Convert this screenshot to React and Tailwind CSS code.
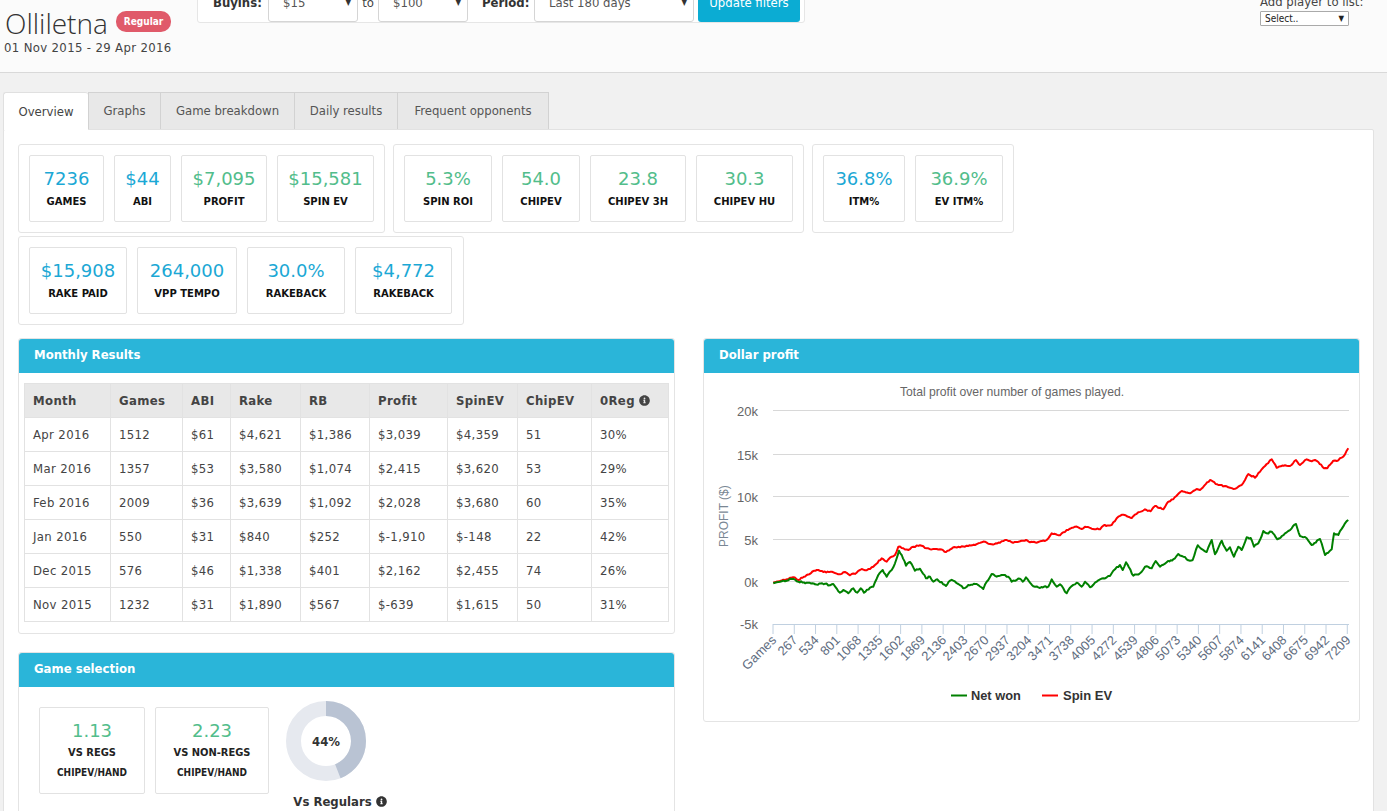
import React from "react";
import { FaInfoCircle } from "react-icons/fa";

const body = "font-['DejaVu_Sans_Condensed','DejaVu_Sans',sans-serif]";
const verdana = "font-['DejaVu_Sans',sans-serif]";
const BLUE = "text-[#1ba8d5]";
const GREEN = "text-[#52bd8b]";

const g1 = [
  ["7236", "GAMES", BLUE, "w-[75px]"],
  ["$44", "ABI", BLUE, "w-[57px]"],
  ["$7,095", "PROFIT", GREEN, "w-[86px]"],
  ["$15,581", "SPIN EV", GREEN, "w-[97px]"],
];
const g2 = [
  ["5.3%", "SPIN ROI", GREEN, "w-[88px]"],
  ["54.0", "CHIPEV", GREEN, "w-[78px]"],
  ["23.8", "CHIPEV 3H", GREEN, "w-[96px]"],
  ["30.3", "CHIPEV HU", GREEN, "w-[97px]"],
];
const g3 = [
  ["36.8%", "ITM%", BLUE, "w-[82px]"],
  ["36.9%", "EV ITM%", GREEN, "w-[88px]"],
];
const g4 = [
  ["$15,908", "RAKE PAID", BLUE, "w-[98px]"],
  ["264,000", "VPP TEMPO", BLUE, "w-[100px]"],
  ["30.0%", "RAKEBACK", BLUE, "w-[98px]"],
  ["$4,772", "RAKEBACK", BLUE, "w-[97px]"],
];

const rows = [
  ["Apr 2016", "1512", "$61", "$4,621", "$1,386", "$3,039", "$4,359", "51", "30%"],
  ["Mar 2016", "1357", "$53", "$3,580", "$1,074", "$2,415", "$3,620", "53", "29%"],
  ["Feb 2016", "2009", "$36", "$3,639", "$1,092", "$2,028", "$3,680", "60", "35%"],
  ["Jan 2016", "550", "$31", "$840", "$252", "$-1,910", "$-148", "22", "42%"],
  ["Dec 2015", "576", "$46", "$1,338", "$401", "$2,162", "$2,455", "74", "26%"],
  ["Nov 2015", "1232", "$31", "$1,890", "$567", "$-639", "$1,615", "50", "31%"],
];
const heads = ["Month", "Games", "ABI", "Rake", "RB", "Profit", "SpinEV", "ChipEV", "0Reg"];
const colW = [86, 72, 48, 70, 69, 78, 70, 74, 77];

const z6 = (a) => a.map(([x, y]) => [700 + x / 3, 400 + y / 3]);
const z7 = (a) => a.map(([x, y]) => [1040 + x / 3, 400 + y / 3]);

const red = [
  ...z6([[220,548],[240,543],[260,538],[280,532],[295,540],[320,525],[350,510],[370,516],[400,517],[420,523],[435,516],[450,526],[470,518],[485,507],[500,511],[520,500],[545,475],[560,485],[575,470],[585,465],[595,440],[610,445],[625,450],[640,440],[660,436],[680,445],[700,447],[720,448],[738,456],[760,442],[780,442],[800,437],[825,435],[835,430],[855,425],[875,433],[900,428],[920,420],[935,427],[960,424],[978,420],[990,427],[1015,426]]),
  ...z7([[0,424],[20,420],[35,400],[60,406],[80,390],[105,380],[125,387],[135,380],[155,386],[180,388],[190,377],[215,375],[235,350],[250,344],[275,354],[295,337],[315,328],[332,334],[345,318],[370,328],[385,305],[400,298],[425,273],[450,280],[470,267],[480,270],[510,240],[535,255],[555,258],[565,262],[585,266],[605,255],[625,222],[645,233],[665,208],[680,192],[695,178],[710,203],[735,196],[750,198],[768,180],[780,195],[800,178],[815,184],[825,180],[835,186],[852,205],[862,205],[880,182],[890,183],[910,170],[925,145]]),
];
const green = [
  ...z6([[220,550],[240,545],[260,542],[275,537],[295,545],[320,548],[345,553],[375,551],[390,556],[400,552],[420,578],[430,570],[445,580],[460,565],[472,578],[482,565],[492,578],[510,563],[520,560],[535,525],[548,510],[560,530],[575,510],[585,490],[597,452],[605,465],[618,497],[630,486],[645,512],[660,506],[678,535],[690,530],[700,545],[712,538],[738,558],[750,542],[760,542],[775,552],[790,565],[805,555],[830,552],[850,567],[860,545],[875,522],[890,530],[905,525],[925,530],[935,545],[950,540],[960,536],[968,545],[978,532],[990,548],[1005,560],[1015,562]]),
  ...z7([[0,564],[25,560],[35,538],[50,560],[60,553],[80,580],[90,563],[110,548],[125,560],[135,545],[150,562],[170,545],[190,535],[210,528],[225,508],[240,495],[248,510],[258,487],[280,527],[300,520],[315,500],[335,505],[347,483],[360,500],[380,487],[405,475],[415,462],[430,470],[450,482],[458,480],[473,436],[500,456],[515,420],[525,463],[545,422],[560,452],[570,442],[582,470],[595,440],[605,450],[620,412],[632,414],[642,440],[655,430],[670,393],[680,400],[695,395],[712,418],[735,400],[755,385],[768,372],[780,408],[800,415],[815,435],[840,417],[855,465],[875,448],[882,400],[895,405],[915,370],[925,360]]),
];

// Resample each hand-read curve every 1.5px and add a fixed small wobble so it has the jagged look of raw data.
function roughen(pts, amp) {
  const out = [];
  for (let i = 0; i < pts.length - 1; i++) {
    const [x0, y0] = pts[i];
    const [x1, y1] = pts[i + 1];
    const n = Math.max(1, Math.round((x1 - x0) / 1.5));
    for (let k = 0; k < n; k++) {
      const t = k / n;
      const x = x0 + (x1 - x0) * t;
      const s = Math.sin(x * 127.1) * 43758.5453;
      const w = k === 0 ? 0 : (s - Math.floor(s) - 0.5) * 2 * amp;
      out.push([x, y0 + (y1 - y0) * t + w]);
    }
  }
  out.push(pts[pts.length - 1]);
  return out;
}
const toD = (pts) => pts.map(([x, y], i) => `${i ? "L" : "M"}${x.toFixed(1)} ${y.toFixed(1)}`).join(" ");

const ticks = ["Games","267","534","801","1068","1335","1602","1869","2136","2403","2670","2937","3204","3471","3738","4005","4272","4539","4806","5073","5340","5607","5874","6141","6408","6675","6942","7209"];
const yTicks = [["20k", 410.5], ["15k", 454.5], ["10k", 496.5], ["5k", 539.5], ["0k", 581.5]];

function Stat({ v }) {
  return (
    <div className={`${v[3]} h-[67px] bg-white border border-[#e2e2e2] rounded-[2px] flex flex-col items-center pt-[11px] ${verdana}`}>
      <div className={`text-[18px] leading-[24px] whitespace-nowrap ${v[2]}`}>{v[0]}</div>
      <div className="text-[10px] leading-[14px] font-bold text-[#111] mt-[4px] whitespace-nowrap">{v[1]}</div>
    </div>
  );
}
function Group({ items, extra = "" }) {
  return (
    <div className={`flex gap-[10px] p-[10px] border border-[#e4e4e4] rounded-[3px] bg-white ${extra}`}>
      {items.map((v) => <Stat key={v[1] + v[0]} v={v} />)}
    </div>
  );
}
function PanelHead({ children }) {
  return (
    <div className="h-[34px] bg-[#2ab5d9] rounded-t-[3px] pl-[15px] pb-[3px] flex items-center text-white font-bold text-[13px]">
      {children}
    </div>
  );
}
function Sel({ w, text }) {
  return (
    <div className={`${w} h-[34px] bg-white border border-[#d5d5d5] rounded-[3px] flex items-center justify-between pl-[14px] pr-[6px] pb-[4px] text-[13px] text-[#555]`}>
      <span>{text}</span>
      <span className="text-[8px] text-[#333]">▼</span>
    </div>
  );
}
function GameCard({ w, v, a }) {
  return (
    <div className={`${w} h-[87px] border border-[#e2e2e2] rounded-[2px] flex flex-col items-center pt-[11px]`}>
      <div className={`text-[18px] leading-[24px] ${GREEN} ${verdana}`}>{v}</div>
      <div className="text-[11px] leading-[14px] font-bold text-[#222] mt-[3px]">{a}</div>
      <div className="text-[10px] leading-[14px] text-[#222] font-semibold mt-[6px]">CHIPEV/HAND</div>
    </div>
  );
}

export default function App() {
  return (
    <div className={`h-[811px] overflow-hidden bg-[#f1f1f1] text-[#444] ${body}`}>
      <header className="h-[73px] bg-[#fbfbfb] border-b border-[#d9d9d9] flex items-start overflow-hidden">
        <div className="w-[197px] shrink-0 pl-[5px] pt-[4px]">
          <div className="flex items-center h-[34px]">
            <span className="font-['Open_Sans',sans-serif] font-light text-[28px] leading-[34px] pt-[3px] text-[#333]">Olliletna</span>
            <span className="ml-[8px] h-[21px] px-[8px] rounded-[10px] bg-[#e05a6a] text-white text-[10px] font-bold flex items-center">Regular</span>
          </div>
          <div className="text-[13px] leading-[16px] mt-[2px] -ml-[1px] tracking-[0.35px] text-[#444] whitespace-nowrap">01 Nov 2015 - 29 Apr 2016</div>
        </div>
        <div className="w-[608px] h-[36px] -mt-[13px] shrink-0 bg-white border border-[#e6e6e6] rounded-[3px] flex items-center pl-[15px] pr-[4px] pb-[1px]">
          <span className="font-bold text-[13px] text-[#333] w-[55px] mb-[4px]">Buyins:</span>
          <Sel w="w-[90px]" text="$15" />
          <span className="w-[20px] text-center text-[13px] mb-[4px]">to</span>
          <Sel w="w-[90px]" text="$100" />
          <span className="font-bold text-[13px] text-[#333] ml-[14px] w-[52px] mb-[4px]">Period:</span>
          <Sel w="w-[160px]" text="Last 180 days" />
          <div className="ml-[4px] w-[102px] h-[34px] rounded-[3px] bg-[#0bacd3] text-white text-[13px] pb-[4px] flex items-center justify-center">Update filters</div>
        </div>
        <div className="ml-[455px] -mt-[6px] w-[110px]">
          <div className="text-[13px] leading-[16px] whitespace-nowrap text-[#444]">Add player to list:</div>
          <div className="mt-[1px] w-[89px] h-[15px] bg-white border border-[#aaa] rounded-[1px] flex items-center justify-between pl-[4px] pr-[4px] text-[10px] text-[#222]">
            <span>Select..</span><span className="text-[8px]">▼</span>
          </div>
        </div>
      </header>

      <main className="pt-[19px] pl-[3px] w-[1374px]">
        <div className="flex relative z-10 h-[38px] text-[13px]">
          <div className="w-[85px] bg-white border-l border-t border-[#e0e0e0] rounded-t-[3px] flex items-center justify-center text-[#444]">Overview</div>
          {[["Graphs", "w-[73px]"], ["Game breakdown", "w-[135px]"], ["Daily results", "w-[104px]"], ["Frequent opponents", "w-[152px]"]].map(([t, w]) => (
            <div key={t} className={`${w} h-[37px] bg-[#e8e8e8] border-l border-t border-r border-[#d2d2d2] -mr-[1px] flex items-center justify-center text-[#555]`}>{t}</div>
          ))}
        </div>
        <div className="-mt-[1px] bg-white border border-[#e2e2e2] rounded-[2px] pt-[14px] pl-[14px] pr-[13px] h-[700px]">
          <div className="flex gap-[8px]">
            <Group items={g1} />
            <Group items={g2} />
            <Group items={g3} />
          </div>
          <div className="flex mt-[3px]">
            <Group items={g4} extra="pr-[11px]" />
          </div>

          <div className="flex gap-[28px] mt-[13px] items-start">
            <div className="w-[657px] shrink-0">
              <section className="border border-[#e4e4e4] rounded-[3px] h-[296px]">
                <PanelHead>Monthly Results</PanelHead>
                <div className="pt-[10px] px-[5px]">
                  <table className="border-collapse w-[645px] table-fixed text-[13px] tracking-[0.35px]">
                    <colgroup>{colW.map((w, i) => <col key={i} style={{ width: w }} />)}</colgroup>
                    <thead>
                      <tr className="h-[34px] bg-[#e8e8e8]">
                        {heads.map((h) => (
                          <th key={h} className="text-left pl-[8px] font-bold text-[#444] border border-[#e2e2e2]">
                            <span className="inline-flex items-center gap-[4px]">{h}{h === "0Reg" && <FaInfoCircle className="w-[11px] h-[11px]" />}</span>
                          </th>
                        ))}
                      </tr>
                    </thead>
                    <tbody>
                      {rows.map((r) => (
                        <tr key={r[0]} className="h-[34px]">
                          {r.map((c, i) => <td key={i} className="pl-[8px] border border-[#e2e2e2] text-[#444] whitespace-nowrap">{c}</td>)}
                        </tr>
                      ))}
                    </tbody>
                  </table>
                </div>
              </section>
              <section className="mt-[18px] border border-[#e4e4e4] rounded-[3px] h-[300px]">
                <PanelHead>Game selection</PanelHead>
                <div className="flex pl-[20px] pt-[20px]">
                  <GameCard w="w-[106px]" v="1.13" a="VS REGS" />
                  <div className="w-[10px]" />
                  <GameCard w="w-[114px]" v="2.23" a="VS NON-REGS" />
                  <div className="ml-[7px] -mt-[6px] w-[100px] flex flex-col items-center">
                    <svg width="80" height="80" viewBox="0 0 80 80">
                      <circle cx="40" cy="40" r="32.5" fill="none" stroke="#e6e9ef" strokeWidth="15" />
                      <circle cx="40" cy="40" r="32.5" fill="none" stroke="#b9c3d3" strokeWidth="15" strokeDasharray="89.85 204.2" transform="rotate(-90 40 40)" />
                      <text x="40" y="44.5" textAnchor="middle" fontSize="13" fontWeight="700" fill="#333">44%</text>
                    </svg>
                    <div className="text-[13px] font-bold text-[#333] mt-[11px] ml-[28px] whitespace-nowrap inline-flex items-center gap-[4px]">Vs Regulars <FaInfoCircle className="w-[11px] h-[11px]" /></div>
                  </div>
                </div>
              </section>
            </div>

            <section className="w-[657px] h-[384px] shrink-0 border border-[#e4e4e4] rounded-[3px]">
              <PanelHead>Dollar profit</PanelHead>
              <svg width="655" height="348" viewBox="704 373 655 348" className="block" fontFamily="'Liberation Sans', sans-serif">
                <text x="1012" y="396" textAnchor="middle" fontSize="12.2" fill="#666">Total profit over number of games played.</text>
                {yTicks.map(([t, y]) => (
                  <g key={t}>
                    <line x1="773" x2="1349" y1={y} y2={y} stroke="#d8d8d8" />
                    <text x="758" y={y + 5} textAnchor="end" fontSize="13" fill="#666">{t}</text>
                  </g>
                ))}
                <text x="758" y="629" textAnchor="end" fontSize="13" fill="#666">-5k</text>
                <text transform="translate(728 547) rotate(-90)" fontSize="12" fill="#7a8794">PROFIT ($)</text>
                <line x1="773" x2="1349" y1="624.5" y2="624.5" stroke="#c0d0e0" />
                {ticks.map((t, i) => {
                  const x = 773 + i * 21.27;
                  return (
                    <g key={t}>
                      <line x1={x} x2={x} y1="624" y2="634" stroke="#c0d0e0" />
                      <text transform={`translate(${x + 4} 641) rotate(-45)`} textAnchor="end" fontSize="13" fill="#606c80">{t}</text>
                    </g>
                  );
                })}
                <path d={toD(roughen(red, 0.7))} fill="none" stroke="#ff0000" strokeWidth="2" strokeLinejoin="round" />
                <path d={toD(roughen(green, 0.9))} fill="none" stroke="#008000" strokeWidth="2" strokeLinejoin="round" />
                <line x1="951" x2="967" y1="695.5" y2="695.5" stroke="#008000" strokeWidth="2" />
                <text x="971" y="700" fontSize="12.8" fontWeight="700" fill="#333">Net won</text>
                <line x1="1042" x2="1058" y1="695.5" y2="695.5" stroke="#ff0000" strokeWidth="2" />
                <text x="1063" y="700" fontSize="13" fontWeight="700" fill="#333">Spin EV</text>
              </svg>
            </section>
          </div>
        </div>
      </main>
    </div>
  );
}
